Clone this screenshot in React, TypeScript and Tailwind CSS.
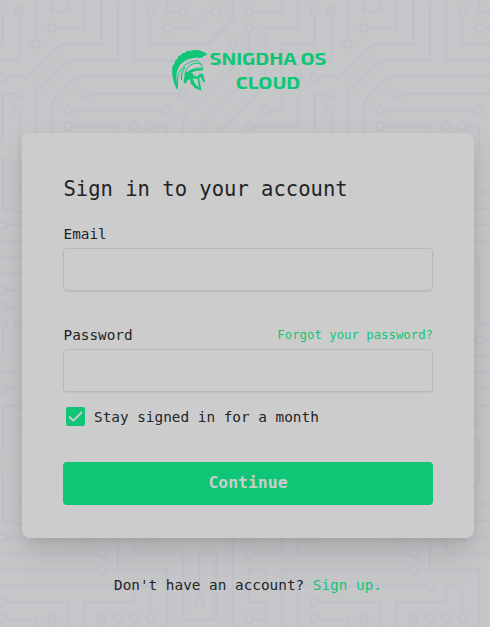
import React from "react";

const CIRCUIT =
  "M44.1 224a5 5 0 1 1 0 2H0v-2h44.1zm160 48a5 5 0 1 1 0 2H82v-2h122.1zm57.8-46a5 5 0 1 1 0-2H304v2h-42.1zm0 16a5 5 0 1 1 0-2H304v2h-42.1zm6.2-114a5 5 0 1 1 0 2h-86.2a5 5 0 1 1 0-2h86.2zm-256-48a5 5 0 1 1 0 2H0v-2h12.1zm185.8 34a5 5 0 1 1 0-2h86.2a5 5 0 1 1 0 2h-86.2zM258 12.1a5 5 0 1 1-2 0V0h2v12.1zm-64 208a5 5 0 1 1-2 0v-54.2a5 5 0 1 1 2 0v54.2zm48-198.2V80h62v2h-64V21.9a5 5 0 1 1 2 0zm16 16V64h46v2h-48V37.9a5 5 0 1 1 2 0zm-128 96V208h16v12.1a5 5 0 1 1-2 0V210h-16v-76.1a5 5 0 1 1 2 0zm-5.9-21.9a5 5 0 1 1 0 2H114v48H85.9a5 5 0 1 1 0-2H112v-48h12.1zm-6.2 130a5 5 0 1 1 0-2H176v-74.1a5 5 0 1 1 2 0V242h-60.1zm-16-64a5 5 0 1 1 0-2H114v48h10.1a5 5 0 1 1 0 2H112v-48h-10.1zM66 284.1a5 5 0 1 1-2 0V274H50v30h-2v-32h18v12.1zM236.1 176a5 5 0 1 1 0 2H226v94h48v32h-2v-30h-48v-98h12.1zm25.8-30a5 5 0 1 1 0-2H274v44.1a5 5 0 1 1-2 0V146h-10.1zm-64 96a5 5 0 1 1 0-2H208v-80h16v-14h-42.1a5 5 0 1 1 0-2H226v18h-16v80h-12.1zm86.2-210a5 5 0 1 1 0 2H272V0h2v32h10.1zM98 101.9V146H53.9a5 5 0 1 1 0-2H96v-42.1a5 5 0 1 1 2 0zM53.9 34a5 5 0 1 1 0-2H80V0h2v34H53.9zm60.1 3.9V66H82v64H69.9a5 5 0 1 1 0-2H80V64h32V37.9a5 5 0 1 1 2 0zM101.9 82a5 5 0 1 1 0-2H128V37.9a5 5 0 1 1 2 0V82h-28.1zm16-64a5 5 0 1 1 0-2H146v44.1a5 5 0 1 1-2 0V18h-26.1zm102.2 270a5 5 0 1 1 0 2H98v14h-2v-16h124.1zM242 149.9V160h16v34h-16v62h48v48h-2v-46h-48v-66h16v-30h-16v-12.1a5 5 0 1 1 2 0zM53.9 18a5 5 0 1 1 0-2H64V2H48V0h18v18H53.9zm112 32a5 5 0 1 1 0-2H192V0h50v2h-48v48h-28.1zm-48-48a5 5 0 0 1-9.8-2h2.07a3 3 0 1 0 5.66 0H178v34h-18V21.9a5 5 0 1 1 2 0V32h14V2h-58.1zm0 96a5 5 0 1 1 0-2H137l32-32h39V21.9a5 5 0 1 1 2 0V66h-40.17l-32 32H117.9zm28.1 90.1a5 5 0 1 1-2 0v-76.51L175.59 80H224V21.9a5 5 0 1 1 2 0V82h-49.59L146 112.41v75.69zm16 32a5 5 0 1 1-2 0v-99.51L184.59 96H300.1a5 5 0 0 1 3.9-3.9v2.07a3 3 0 0 0 0 5.66v2.07a5 5 0 0 1-3.9-3.9H185.41L162 121.41v98.69zm-144-64a5 5 0 1 1-2 0v-3.51l48-48V48h32V0h2v50H66v55.41l-48 48v2.69zM50 53.9v43.51l-48 48V208h26.1a5 5 0 1 1 0 2H0v-65.41l48-48V53.9a5 5 0 1 1 2 0zm-16 16V89.41l-34 34v-2.82l32-32V69.9a5 5 0 1 1 2 0zM12.1 32a5 5 0 1 1 0 2H9.41L0 43.41V40.6L8.59 32h3.51zm265.8 18a5 5 0 1 1 0-2h18.69l7.41-7.41v2.82L297.41 50H277.9zm-16 160a5 5 0 1 1 0-2H288v-71.41l16-16v2.82l-14 14V210h-28.1zm-208 32a5 5 0 1 1 0-2H64v-22.59L40.59 194H21.9a5 5 0 1 1 0-2H41.41L66 216.59V242H53.9zm150.2 14a5 5 0 1 1 0 2H96v-56.6L56.6 162H37.9a5 5 0 1 1 0-2h19.5L98 200.6V256h106.1zm-150.2 2a5 5 0 1 1 0-2H80v-46.59L48.59 178H21.9a5 5 0 1 1 0-2H49.41L82 208.59V258H53.9zM34 39.8v1.61L9.41 66H0v-2h8.59L32 40.59V0h2v39.8zM2 300.1a5 5 0 0 1 3.9 3.9H3.83A3 3 0 0 0 0 302.17V256h18v48h-2v-46H2v42.1zM34 241v63h-2v-62H0v-2h34v1zM17 18H0v-2h16V0h2v18h-1zm273-2h14v2h-16V0h2v16zm-32 273v15h-2v-14h-14v14h-2v-16h18v1zM0 92.1A5.02 5.02 0 0 1 6 97a5 5 0 0 1-6 4.9v-2.07a3 3 0 1 0 0-5.66V92.1zM80 272h2v32h-2v-32zm37.9 32h-2.07a3 3 0 0 0-5.66 0h-2.07a5 5 0 0 1 9.8 0zM5.9 0A5.02 5.02 0 0 1 0 5.9V3.83A3 3 0 0 0 3.83 0H5.9zm294.2 0h2.07A3 3 0 0 0 304 3.83V5.9a5 5 0 0 1-3.9-5.9zm3.9 300.1v2.07a3 3 0 0 0-1.83 1.83h-2.07a5 5 0 0 1 3.9-3.9z";

// Ring centres, in steps of the circuit's 16-unit grid
const NODES: [number, number][] = [
  [3, 14], [13, 17], [16, 14], [16, 15], [17, 8], [11, 8], [1, 5], [12, 7], [18, 7], [16, 1],
  [12, 14], [12, 10], [15, 1], [16, 2], [8, 8], [9, 14], [8, 7], [5, 10], [7, 15], [11, 10],
  [6, 11], [8, 14], [4, 18], [15, 11], [16, 9], [17, 12], [12, 15], [11, 9], [18, 2], [6, 6],
  [3, 9], [3, 2], [7, 2], [4, 8], [6, 5], [8, 2], [7, 1], [9, 4], [14, 18], [15, 9], [3, 1],
  [10, 3], [10, 1], [7, 6], [13, 1], [9, 12], [14, 1], [10, 14], [1, 10], [3, 3], [2, 13],
  [2, 4], [1, 2], [17, 3], [16, 13], [3, 15], [1, 12], [13, 16], [2, 10], [3, 16], [1, 11],
];

function CircuitBackground() {
  return (
    <svg className="absolute inset-0 h-full w-full" aria-hidden="true">
      <defs>
        <pattern
          id="circuit"
          width="304"
          height="304"
          patternUnits="userSpaceOnUse"
          patternTransform="translate(-113.3 -22.5) scale(1.0263)"
        >
          <path d={CIRCUIT} fill="#bfc0c8" />
          {NODES.map(([x, y]) => (
            <circle key={`${x}-${y}`} cx={x * 16 + 1} cy={y * 16 + 1} r="3" fill="#c5c6c8" />
          ))}
        </pattern>
      </defs>
      <rect width="100%" height="100%" fill="url(#circuit)" />
    </svg>
  );
}

function Helmet() {
  return (
    <svg className="h-[42px] w-9 shrink-0" viewBox="0 0 36 42" fill="#10c676">
      <path d="M5 41C1.500 34-.8 25.500.4 17.500l2.200-3 .3-2.500 2.600-2.200.6-2.500 3.100-1.200 1-1.900 3.300-.6L15 1.800l3.200.1C24.500 0 31 1.700 35.500 5.500l-4.200 1.700-1.300 1.800-2.900-.3C20 8.200 12.500 10.500 8.200 15.800c-2.800 4-4 9-3.700 14.200 0 2.500 1.300 6 1.500 7.500z" />
      <path d="M5.500 38c-.8-9 .8-16 7-21.400 3.800-3.500 9-5 13-4.900 1.600 1 2.600 2.400 3.300 4" fill="none" stroke="#10c676" strokeWidth="1" />
      <path d="M9.500 31c-.3-5.500.6-9.500 3.400-13" fill="none" stroke="#10c676" strokeWidth="1.200" />
      <path d="M14.200 20.500c3.300-5.600 9.500-7.500 15.200-5.300l1.200 4.200c-4.500-1-9.500.2-14.500 3.500l-3 2.200z" fill="none" stroke="#10c676" strokeWidth="1" />
      <path d="M12.500 25c4.500-3.800 11-6.300 18.300-5l.3 1.600c-7-.8-12.500 1.400-18.500 6z" />
      <path d="m11.500 34 1-7 5.500-3.100c2.200-.8 3.700.5 3.300 2.600l4.200 1.200 2-2.400 3.200-.8 2.500 8.700-2-.3-2.100-5-2 1 2.400 12.900-6.700-2.900-4-4.500-.8-4.500-2 1-2.300 3.600z" />
      <path d="m20.700 29.500 2.400 5.400 3.700 3.700-1-8.600z" fill="#c5c6c8" />
    </svg>
  );
}

function Field({ id, label, type, aside }: { id: string; label: string; type: string; aside?: string }) {
  return (
    <div>
      <div className="flex h-7 items-center justify-between">
        <label htmlFor={id} className="pl-[0.5px] pt-0.5 text-[14.370px]">{label}</label>
        {aside && <a className="text-[12.320px] text-[#10c676]">{aside}</a>}
      </div>
      <input
        id={id}
        type={type}
        className="block h-[43px] w-full rounded-[4px] border border-[#b7b8ba] bg-[#cccccc] px-3 shadow-[0_1px_1px_rgba(0,0,0,0.06)]"
      />
    </div>
  );
}

export default function App() {
  return (
    <div className="relative h-[627px] w-full overflow-hidden bg-[#c5c6c8] font-['DejaVu_Sans_Mono',monospace] text-[#222426]">
      <CircuitBackground />
      <div className="relative flex flex-col pl-[22px] pr-4">
        <header className="flex h-[133px] pl-[150px] pt-[49px]">
          <Helmet />
          <div className="-mt-[3px] ml-[1px] flex h-12 w-[118px] origin-center scale-x-[1.120] flex-col items-center font-['Exo_2',Inter,sans-serif] text-[18.200px] font-bold leading-6 text-[#10c676]">
            <span className="whitespace-nowrap">SNIGDHA OS</span>
            <span>CLOUD</span>
          </div>
        </header>

        <main className="h-[405px] rounded-[8px] bg-[#cccccc] px-[41px] pt-[42px] shadow-[0_15px_32px_-2px_rgba(0,0,0,0.13),0_5px_12px_-3px_rgba(0,0,0,0.1)]">
          <h1 className="whitespace-nowrap pl-[0.5px] text-[20.530px] leading-7">Sign in to your account</h1>
          <form className="mt-[17px]">
            <Field id="email" label="Email" type="email" />
            <div className="mt-[30px]">
              <Field id="password" label="Password" type="password" aside="Forgot your password?" />
            </div>
            <div className="mt-[15px] flex h-[19px] items-center pl-[3px]">
              <span className="flex size-[19px] items-center justify-center rounded-[2px] bg-[#10c676]">
                <svg className="size-[19px]" viewBox="0 0 19 19" fill="none" stroke="#cccccc" strokeWidth="1.800">
                  <path d="m3 9.500 4.300 4.200L16 5" />
                </svg>
              </span>
              <span className="ml-[9px] pt-0.5 text-[14.370px]">Stay signed in for a month</span>
            </div>
            <button
              type="button"
              className="mt-9 block h-[43px] w-full rounded-[4px] bg-[#10c676] text-[16.420px] font-bold text-[#cccccc]"
            >
              Continue
            </button>
          </form>
        </main>

        <p className="mt-[37px] text-center text-[14.370px] leading-5">
          Don't have an account? <a className="text-[#10c676]">Sign up.</a>
        </p>
      </div>
    </div>
  );
}
